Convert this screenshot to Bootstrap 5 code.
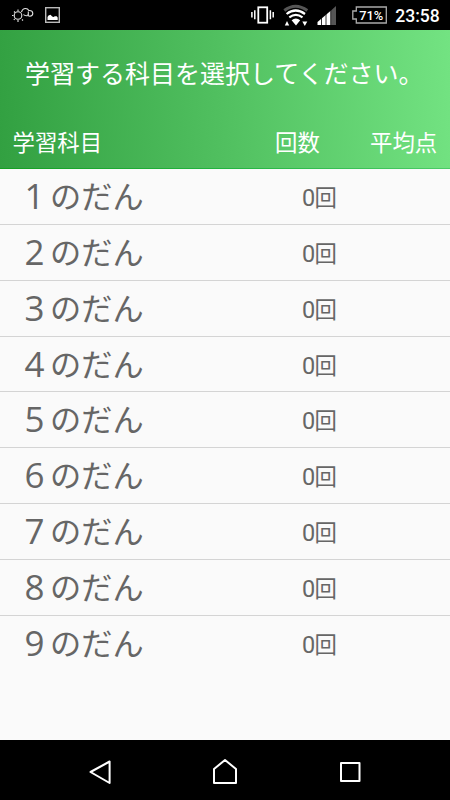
<!DOCTYPE html>
<html lang="ja">
<head>
<meta charset="utf-8">
<meta name="viewport" content="width=device-width, initial-scale=1">
<title>学習科目</title>
<link href="https://cdn.jsdelivr.net/npm/bootstrap@5.3.0/dist/css/bootstrap.min.css" rel="stylesheet">
<style>
body{font-family:"Noto Sans CJK JP",sans-serif;background:#fafafa;color:#666;height:800px;overflow:hidden}
.status{height:30px;font-family:Roboto,"Noto Sans CJK JP",sans-serif}
.status svg,.softkeys svg{display:block}
.hero{height:139px;background:linear-gradient(86deg,#32a041 0%,#50bf5f 48%,#73e382 100%);border-bottom:1px solid;border-image:linear-gradient(90deg,#149f22,#22b440 50%,#4ccb68) 1}
.hero h1{font-size:25px;line-height:36px;font-weight:400;margin:0;padding:24px 0 0 25px;white-space:nowrap}
.heads{font-size:22.4px;line-height:32px;padding:35px 12.5px 0 12.5px}
.c-name{width:262.5px}
.c-count{width:95px}
.subject{height:55.85px;border-bottom:1.4px solid #d4d4d4;padding-left:19px;line-height:51px}
.subject:last-child{border-bottom:0}
.s-name{width:283px;font-size:31.2px}
.digit{display:inline-block;width:31px;text-align:center;font-family:"Open Sans",sans-serif;font-size:35px;line-height:1;vertical-align:-1px}
.s-count{font-size:22.4px;line-height:55px}
.tally{font-family:Roboto,sans-serif;font-size:23.5px;line-height:1;letter-spacing:-.7px}
.softkeys{height:60px}
</style>
<script src="https://cdn.jsdelivr.net/npm/bootstrap@5.3.0/dist/js/bootstrap.bundle.min.js"></script>
</head>
<body class="d-flex flex-column">
<header class="status bg-black flex-shrink-0">
<svg width="450" height="30" viewBox="0 0 450 30">
<g fill="none" stroke="#e4e4e4" stroke-width="1.100">
<circle cx="18" cy="15.500" r="3.800"/>
<path d="M18 9.500v1.500M18 20v2M12 15.500h1.500M14 11.500l1 1M13.800 19.800l1-1M22 19.500l1 1"/>
<path d="M21.500 12q1-3.500 4-3.500q2.400 0 3.300 2q3.700-.3 4 2.700q0 2.800-3 3q-1.600 0-2.300-1.700M23.500 14.500q1 1.500 4 1.200M28.300 11.500v4"/>
</g>
<rect x="45.700" y="7.700" width="13.600" height="14.600" fill="none" stroke="#bbb" stroke-width="1.400"/>
<path d="M47.500 20v-3l1-1.500 2-.7 1.700 1.700 1.500.5 1-.8h2l1 1.300V20z" fill="#fff"/>
<g fill="none" stroke="#fff" stroke-width="1.500"><rect x="258.300" y="7.300" width="8.900" height="15.400" stroke-width="1.800"/><path d="M254.800 10.300v9M270.400 10.300v9M251.900 12v5.500M273.200 12v5.500"/></g>
<path d="M284.300 10.500q11.200-8.500 23 0" fill="none" stroke="#555" stroke-width="3"/>
<path d="M286.600 14q9-7 18.400 0M289.300 17.300q6.500-5 13.200 0" fill="none" stroke="#fff" stroke-width="2.200"/>
<path d="M291.600 20.200q4.200-3.600 8.600 0L296 25.500zM284.800 25.500l2.200-4.500 2.200 4.500zM302.300 21.500h5l-2.500 4.500z" fill="#fff"/>
<path d="M317.500 25v-3l13.500-11.500V25z" fill="#fff"/><path d="M331 10.500l5-4.500v19h-5z" fill="#555"/>
<path d="M321.500 17v8M326 13v12M330.700 9v16" stroke="#000" stroke-width=".8"/>
<path d="M356.300 7h30v16h-30v-4h-3.500v-8h3.500z" fill="none" stroke="#aaa" stroke-width="1.300"/>
<text x="359.300" y="19.500" fill="#fff" font-size="13" font-weight="500" textLength="24" lengthAdjust="spacingAndGlyphs">71%</text>
<text x="395.300" y="22" fill="#fff" font-size="18.500" font-weight="500" textLength="44.500" lengthAdjust="spacingAndGlyphs">23:58</text>
</svg>
</header>
<section class="hero text-white flex-shrink-0">
<h1>学習する科目を選択してください。</h1>
<div class="heads d-flex"><span class="c-name">学習科目</span><span class="c-count">回数</span><span>平均点</span></div>
</section>
<main class="flex-grow-1">
<div class="subject d-flex"><span class="s-name"><span class="digit">1</span>のだん</span><span class="s-count"><span class="tally">0</span>回</span></div>
<div class="subject d-flex"><span class="s-name"><span class="digit">2</span>のだん</span><span class="s-count"><span class="tally">0</span>回</span></div>
<div class="subject d-flex"><span class="s-name"><span class="digit">3</span>のだん</span><span class="s-count"><span class="tally">0</span>回</span></div>
<div class="subject d-flex"><span class="s-name"><span class="digit">4</span>のだん</span><span class="s-count"><span class="tally">0</span>回</span></div>
<div class="subject d-flex"><span class="s-name"><span class="digit">5</span>のだん</span><span class="s-count"><span class="tally">0</span>回</span></div>
<div class="subject d-flex"><span class="s-name"><span class="digit">6</span>のだん</span><span class="s-count"><span class="tally">0</span>回</span></div>
<div class="subject d-flex"><span class="s-name"><span class="digit">7</span>のだん</span><span class="s-count"><span class="tally">0</span>回</span></div>
<div class="subject d-flex"><span class="s-name"><span class="digit">8</span>のだん</span><span class="s-count"><span class="tally">0</span>回</span></div>
<div class="subject d-flex"><span class="s-name"><span class="digit">9</span>のだん</span><span class="s-count"><span class="tally">0</span>回</span></div>
</main>
<footer class="softkeys bg-black flex-shrink-0">
<svg width="450" height="60" viewBox="0 0 450 60" fill="none" stroke="#fff" stroke-width="2" stroke-linejoin="round">
<path d="M90.500 32L109.600 21.500V43z"/>
<path d="M214 29L225 20l11 9v14h-22z"/>
<rect x="341" y="23" width="18.500" height="18"/>
</svg>
</footer>
</body>
</html>
